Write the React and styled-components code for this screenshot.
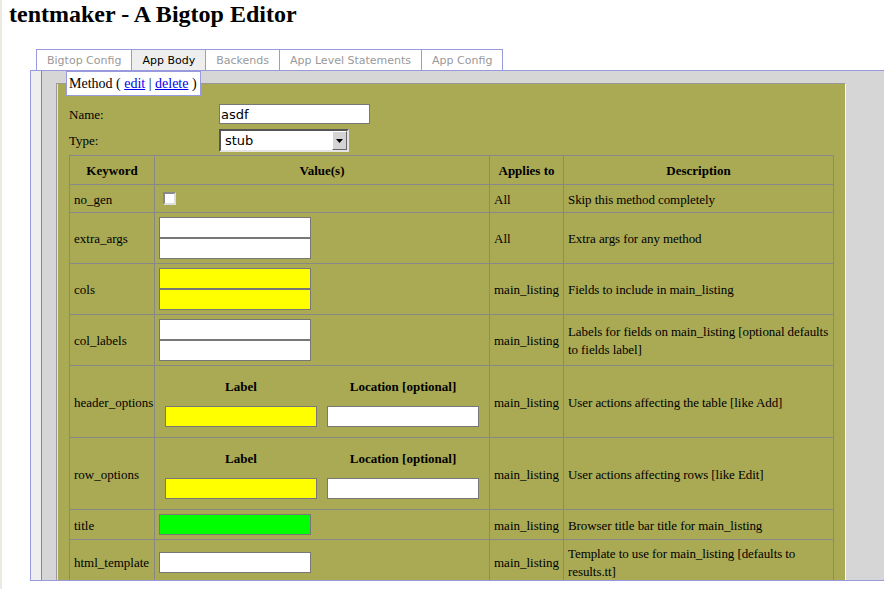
import React from 'react';
import styled, { createGlobalStyle } from 'styled-components';

const GlobalStyle = createGlobalStyle`
  html, body {
    margin: 0;
    padding: 0;
    background: #fff;
    overflow: hidden;
  }
  body {
    font-family: "Liberation Serif", "Times New Roman", serif;
    font-size: 13px;
    color: #000;
  }
`;

const Page = styled.div`
  border-left: 2px solid #ece9e2;
  min-height: 589px;
  box-sizing: border-box;
`;

const Title = styled.h1`
  margin: 0;
  padding: 2px 0 0 7px;
  font-size: 24px;
  line-height: 24px;
  font-weight: bold;
`;

const TabBar = styled.div`
  display: flex;
  margin-top: 23px;
  padding-left: 34px;
`;

const Tab = styled.div`
  font-family: "DejaVu Sans", Verdana, sans-serif;
  font-size: 11px;
  line-height: 19px;
  padding: 1px 10px 0;
  color: ${(p) => (p.$active ? '#000' : '#999')};
  background: ${(p) => (p.$active ? '#eee' : '#fff')};
  border: 1px solid #9999dd;
  border-bottom: none;
  border-left: none;
  &:first-child {
    border-left: 1px solid #9999dd;
  }
`;

const Panel = styled.div`
  display: flex;
  margin-left: 28px;
  width: 900px;
  height: 511px;
  box-sizing: border-box;
  border: 1px solid #9999dd;
  background: #eee;
  padding-left: 10px;
  overflow: hidden;
`;

const Well = styled.div`
  position: relative;
  flex: 1;
  border-left: 1px solid #888;
  background: #d6d6d6;
  padding: 12px 0 0 14px;
`;

const Legend = styled.div`
  position: absolute;
  top: 0;
  left: 24px;
  height: 25px;
  box-sizing: border-box;
  border: 1px solid #9999dd;
  background: #fff;
  padding: 0 3px 0 2px;
  font-size: 14px;
  line-height: 24px;
  white-space: nowrap;
  z-index: 1;
  a {
    color: #0000ee;
    text-decoration: underline;
  }
`;

const MethodBox = styled.div`
  width: 790px;
  box-sizing: border-box;
  background: #aaaa55;
  border: 1px solid;
  border-color: #999 #fff #fff #999;
  box-shadow: inset 1px 0 0 #e8e8d0;
  padding: 20px 12px 0 12px;
`;

const FormGrid = styled.div`
  display: grid;
  grid-template-columns: 150px 1fr;
  row-gap: 5px;
  align-items: center;
  line-height: 18px;
  span {
    padding-top: 1px;
  }
`;

const TextInput = styled.input`
  display: block;
  width: ${(p) => p.$width || 152}px;
  height: ${(p) => p.$height || 21}px;
  box-sizing: border-box;
  margin: 0;
  padding: 0 1px;
  border: 1px solid #777;
  background: ${(p) => p.$bg || '#fff'};
  font-family: "DejaVu Sans", Verdana, sans-serif;
  font-size: 13px;
  color: #000;
  outline: none;
`;

const SelectBox = styled.div`
  display: flex;
  align-items: center;
  width: 130px;
  height: 23px;
  box-sizing: border-box;
  border: 2px solid;
  border-color: #555 #e4e4e4 #e4e4e4 #555;
  background: #fff;
  padding-left: 4px;
  font-family: "DejaVu Sans", Verdana, sans-serif;
  font-size: 13px;
`;

const SelectButton = styled.div`
  display: flex;
  align-items: center;
  justify-content: center;
  margin-left: auto;
  width: 15px;
  height: 19px;
  box-sizing: border-box;
  background: #d4d4d4;
  border: 1px solid;
  border-color: #fff #666 #666 #fff;
`;

const Grid = styled.table`
  width: 764px;
  margin-top: 3px;
  border-collapse: collapse;
  table-layout: fixed;
  border: 1px solid #888;
  font-size: 13px;
`;

const HeadCell = styled.th`
  border: 1px solid #888;
  padding: 6px 4px 4px;
  line-height: 18px;
  font-weight: bold;
  text-align: center;
`;

const Cell = styled.td`
  border: 1px solid #888;
  padding: ${(p) => (p.$tight ? '5px 1px 3px 4px' : '5px 4px 3px')};
  letter-spacing: ${(p) => (p.$tight ? '-0.08px' : 'normal')};
  line-height: 18px;
  vertical-align: middle;
  text-align: left;
`;

const ValueCell = styled.td`
  border: 1px solid #888;
  padding: 4px;
  vertical-align: middle;
`;

const Check = styled.input`
  appearance: none;
  display: block;
  width: 13px;
  height: 13px;
  margin: 3px 3px 3px 4px;
  box-sizing: border-box;
  border: 2px solid;
  border-color: #888 #ddd #ddd #888;
  background: #fff;
`;

const PairTable = styled.table`
  border-collapse: separate;
  border-spacing: 2px;
  th {
    padding: 5px 4px 3px;
    line-height: 20px;
    font-weight: bold;
    text-align: center;
  }
  td {
    padding: 4px;
  }
`;

const rows = [
  { key: 'no_gen', kind: 'check', applies: 'All', desc: 'Skip this method completely' },
  { key: 'extra_args', kind: 'inputs', colors: ['#fff', '#fff'], applies: 'All', desc: 'Extra args for any method' },
  { key: 'cols', kind: 'inputs', colors: ['#ffff00', '#ffff00'], applies: 'main_listing', desc: 'Fields to include in main_listing' },
  {
    key: 'col_labels',
    kind: 'inputs',
    colors: ['#fff', '#fff'],
    applies: 'main_listing',
    desc: 'Labels for fields on main_listing [optional defaults to fields label]',
  },
  { key: 'header_options', kind: 'pair', applies: 'main_listing', desc: 'User actions affecting the table [like Add]' },
  { key: 'row_options', kind: 'pair', applies: 'main_listing', desc: 'User actions affecting rows [like Edit]' },
  { key: 'title', kind: 'inputs', colors: ['#00ff00'], applies: 'main_listing', desc: 'Browser title bar title for main_listing' },
  {
    key: 'html_template',
    kind: 'inputs',
    colors: ['#fff'],
    applies: 'main_listing',
    desc: 'Template to use for main_listing [defaults to results.tt]',
  },
];

const ValueField = ({ row }) => {
  if (row.kind === 'check') return <Check type="checkbox" />;
  if (row.kind === 'pair') {
    return (
      <PairTable>
        <tbody>
          <tr>
            <th>Label</th>
            <th>Location [optional]</th>
          </tr>
          <tr>
            <td><TextInput $bg="#ffff00" /></td>
            <td><TextInput /></td>
          </tr>
        </tbody>
      </PairTable>
    );
  }
  return row.colors.map((c, i) => <TextInput key={i} $bg={c} />);
};

const App = () => {
  return (
    <Page>
      <GlobalStyle />
      <Title>tentmaker - A Bigtop Editor</Title>
      <TabBar>
        <Tab>Bigtop Config</Tab>
        <Tab $active>App Body</Tab>
        <Tab>Backends</Tab>
        <Tab>App Level Statements</Tab>
        <Tab>App Config</Tab>
      </TabBar>
      <Panel>
        <Well>
          <Legend>
            Method ( <a href="#edit">edit</a> | <a href="#delete">delete</a> )
          </Legend>
          <MethodBox>
            <FormGrid>
              <span>Name:</span>
              <TextInput $width={151} $height={20} defaultValue="asdf" />
              <span>Type:</span>
              <SelectBox>
                <span>stub</span>
                <SelectButton>
                  <svg width="7" height="4" viewBox="0 0 7 4">
                    <path d="M0 0h7L3.5 4z" fill="#000" />
                  </svg>
                </SelectButton>
              </SelectBox>
            </FormGrid>
            <Grid>
              <colgroup>
                <col style={{ width: 85 }} />
                <col style={{ width: 335 }} />
                <col style={{ width: 74 }} />
                <col style={{ width: 270 }} />
              </colgroup>
              <thead>
                <tr>
                  <HeadCell>Keyword</HeadCell>
                  <HeadCell>Value(s)</HeadCell>
                  <HeadCell>Applies to</HeadCell>
                  <HeadCell>Description</HeadCell>
                </tr>
              </thead>
              <tbody>
                {rows.map((row) => (
                  <tr key={row.key}>
                    <Cell>{row.key}</Cell>
                    <ValueCell><ValueField row={row} /></ValueCell>
                    <Cell>{row.applies}</Cell>
                    <Cell $tight>{row.desc}</Cell>
                  </tr>
                ))}
              </tbody>
            </Grid>
          </MethodBox>
        </Well>
      </Panel>
    </Page>
  );
};

export default App;
